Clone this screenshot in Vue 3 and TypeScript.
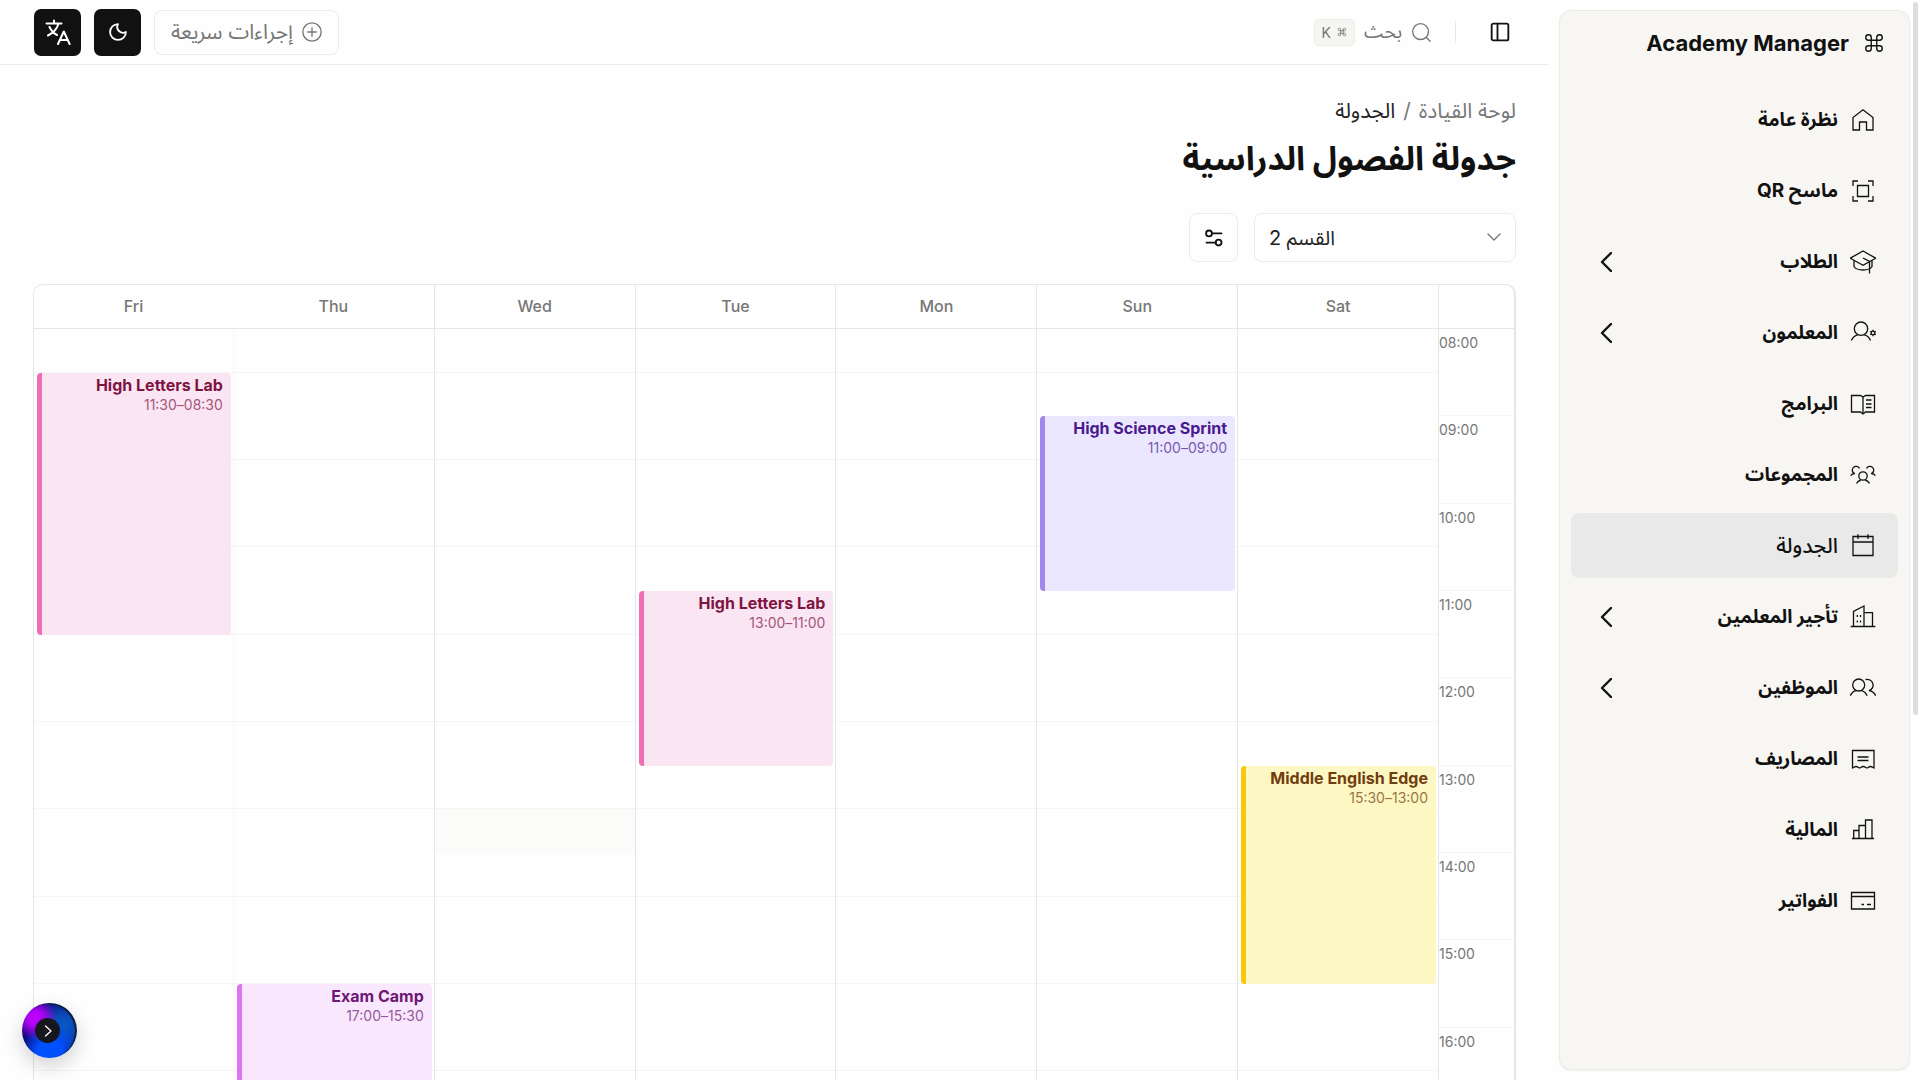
<script setup lang="ts">
import { ref } from 'vue'

interface NavItem {
  label: string
  icon: string[]
  expandable?: boolean
  active?: boolean
}

interface Lesson {
  title: string
  from: string
  to: string
  tone: string
}

interface Day {
  name: string
  lessons: Lesson[]
  hovered?: number
}

const navItems: NavItem[] = [
  { label: 'نظرة عامة', icon: ['M3 23V10.5L13 2.8l10 7.7V23h-6.5v-8h-7v8z'] },
  { label: 'ماسح QR', icon: ['M7.5 7.5h11v11h-11z', 'M8 3H3v5M18 3h5v5M8 23H3v-5M18 23h5v-5'] },
  {
    label: 'الطلاب',
    icon: ['M13 2l12.7 7.2L13 16.3.3 9.2z', 'M4 11.5v6c2 3.200 5.500 3.500 9 3.500s7-.3 9-3.500v-6', 'M13 9l6.500 3.500v12'],
    expandable: true,
  },
  {
    label: 'المعلمون',
    icon: [
      'M4.300 8.700a6.700 6.700 0 1 0 13.400 0a6.700 6.700 0 1 0-13.400 0',
      'M1.300 20.500c1.500-3.300 4-5.100 6.500-5.600M14.200 14.900c2.600.5 5 2.300 6.300 5.600',
      'M21.200 13a1.800 1.800 0 1 0 3.600 0a1.800 1.800 0 1 0-3.600 0M23 9.800v1.400M23 14.800v1.400M20.200 11.400l1.300.7M24.500 13.900l1.300.7M20.200 14.600l1.300-.7M24.500 12.100l1.300-.7',
    ],
    expandable: true,
  },
  {
    label: 'البرامج',
    icon: ['M1.500 4.500h9L13 6l2.500-1.500h9v16.500h-9L13 23l-2.500-2h-9z', 'M13 6v17M16 9h5.500M16 13h5.500M16 16.500h5.500'],
  },
  {
    label: 'المجموعات',
    icon: [
      'M8.800 14a4.200 4.200 0 1 0 8.400 0a4.200 4.200 0 1 0-8.400 0',
      'M6.500 21.500c1-2 2.500-3 4.300-3.500M19.500 21.500c-1-2-2.500-3-4.300-3.500',
      'M9.500 6.500a3.800 3.800 0 1 0-4.800 5.200M16.500 6.500a3.800 3.800 0 1 1 4.800 5.200',
      'M.7 13.800c.7-1.500 2-2.300 4-2.300M25.300 13.800c-.7-1.500-2-2.300-4-2.300',
    ],
  },
  { label: 'الجدولة', icon: ['M3 3.500h20v19H3zM3 9h20M8 1.300v4.700M18 1.300v4.700'], active: true },
  {
    label: 'تأجير المعلمين',
    icon: ['M.7 22.500h24.600M3.500 22.500v-15L14 2v20.500M14 8.700h8.500v13.800', 'M7.300 11v2M10.500 11v2M7.300 16.500v2M10.500 16.500v2'],
    expandable: true,
  },
  {
    label: 'الموظفين',
    icon: [
      'M2.700 10a6 6 0 1 0 12 0a6 6 0 1 0-12 0',
      'M.3 20.700c1.400-3 3.400-4.500 5.700-5M11.400 15.700c2.300.5 4.300 2 5.700 5',
      'M15.500 4.600a5.800 5.800 0 1 1 3.500 11.100c3 .5 5.300 2 6.700 5',
    ],
    expandable: true,
  },
  {
    label: 'المصاريف',
    icon: [
      'M2.500 22V4.500h21.500V22c-1.500 0-1.500-1.500-3.500-1.500S18.500 22 17 22s-1.700-1.500-3.700-1.500S11 22 9.500 22 8 20.500 6 20.500 4 22 2.500 22z',
      'M7.500 11h11M7.500 14.500h11',
    ],
  },
  { label: 'المالية', icon: ['M2 21.500h22M3.700 21.500v-8H9M9 21.500v-13h6.500M15.500 21.500V3H22v18.500'] },
  { label: 'الفواتير', icon: ['M1.500 4.500h23v16.500h-23zM1.500 8.500h23M11.500 16.500h2.500M17 16.500h4'] },
]

const days: Day[] = [
  { name: 'Sat', lessons: [{ title: 'Middle English Edge', from: '13:00', to: '15:30', tone: 'yellow' }] },
  { name: 'Sun', lessons: [{ title: 'High Science Sprint', from: '09:00', to: '11:00', tone: 'violet' }] },
  { name: 'Mon', lessons: [] },
  { name: 'Tue', lessons: [{ title: 'High Letters Lab', from: '11:00', to: '13:00', tone: 'pink' }] },
  { name: 'Wed', lessons: [], hovered: 12 },
  { name: 'Thu', lessons: [{ title: 'Exam Camp', from: '15:30', to: '17:00', tone: 'fuchsia' }] },
  { name: 'Fri', lessons: [{ title: 'High Letters Lab', from: '08:30', to: '11:30', tone: 'pink' }] },
]

const firstHour = 8
const hours = Array.from({ length: 9 }, (_, i) => `${String(firstHour + i).padStart(2, '0')}:00`)
const slots = Array.from({ length: 18 }, (_, i) => i + 1)

/* Grid line of a clock time: one row for every half hour after the first hour. */
function line(time: string): number {
  const [h, m] = time.split(':').map(Number)
  return (h - firstHour) * 2 + m / 30 + 1
}

const section = ref('2')
</script>

<template>
  <div class="app" dir="rtl">
    <aside class="sidebar">
      <div class="panel">
        <div class="brand">
          <svg class="brand-icon" viewBox="0 0 24 24"><path d="M15 6v12a3 3 0 1 0 3-3H6a3 3 0 1 0 3 3V6a3 3 0 1 0-3 3h12a3 3 0 1 0-3-3" /></svg>
          <span>Academy Manager</span>
        </div>
        <nav class="nav">
          <a v-for="item in navItems" :key="item.label" href="#" class="nav-item" :class="{ active: item.active }">
            <svg class="nav-icon" viewBox="0 0 26 26"><path v-for="d in item.icon" :key="d" :d="d" /></svg>
            <span class="nav-label">{{ item.label }}</span>
            <svg v-if="item.expandable" class="nav-chevron" viewBox="0 0 12 20"><path d="M11 1L2 10l9 9" /></svg>
          </a>
        </nav>
      </div>
    </aside>

    <div class="main">
      <header class="topbar">
        <button type="button" class="plain" aria-label="الشريط الجانبي">
          <svg class="i20 bold" viewBox="0 0 24 24"><rect x="2" y="2" width="20" height="20" rx="2" /><path d="M9 2v20" /></svg>
        </button>
        <span class="divider"></span>
        <button type="button" class="search">
          <svg class="i20" viewBox="0 0 24 24"><circle cx="11.500" cy="11.500" r="9.500" /><path d="M18.500 18.500L23 23" /></svg>
          <span>بحث</span>
          <kbd dir="ltr">
            <span>K</span>
            <svg class="cmd" viewBox="0 0 24 24"><path d="M15 6v12a3 3 0 1 0 3-3H6a3 3 0 1 0 3 3V6a3 3 0 1 0-3 3h12a3 3 0 1 0-3-3" /></svg>
          </kbd>
        </button>
        <div class="actions">
          <button type="button" class="quick">
            <svg class="i20" viewBox="0 0 24 24"><circle cx="12" cy="12" r="11" /><path d="M12 7v10M7 12h10" /></svg>
            <span>إجراءات سريعة</span>
          </button>
          <button type="button" class="dark" aria-label="المظهر">
            <svg class="i20 bold" viewBox="0 0 24 24"><path d="M12 2.500a7 7 0 0 0 9.500 9.500A9.500 9.500 0 1 1 12 2.500z" /></svg>
          </button>
          <button type="button" class="dark" aria-label="اللغة">
            <svg class="lang" viewBox="0 0 26 26"><path d="M1.500 4.500h15M9 1.500v3M4.500 8c2 4 4.500 6.500 7.500 8M13.500 4.500C12 10 9 13.500 3 16.500M13 25l5.800-12.500L24.600 25M15 21h7.600" /></svg>
          </button>
        </div>
      </header>

      <main class="content">
        <nav class="crumbs" aria-label="المسار">
          <a href="#">لوحة القيادة</a><span>/</span><span class="here">الجدولة</span>
        </nav>
        <h1>جدولة الفصول الدراسية</h1>
        <div class="filters">
          <div class="select-wrap">
            <select v-model="section" dir="ltr" aria-label="القسم">
              <option value="1">القسم 1</option>
              <option value="2">القسم 2</option>
            </select>
            <svg class="caret" viewBox="0 0 14 8"><path d="M1 1l6 6 6-6" /></svg>
          </div>
          <button type="button" class="tune" aria-label="تصفية">
            <svg class="i20 bold" viewBox="0 0 24 24"><circle cx="6" cy="6.500" r="3.500" /><path d="M9.500 6.500H21M3 17.500h11" /><circle cx="17.500" cy="17.500" r="3.500" /></svg>
          </button>
        </div>

        <section class="calendar">
          <div class="head">
            <div class="corner"></div>
            <div v-for="day in days" :key="day.name" class="day-name">{{ day.name }}</div>
          </div>
          <div class="body">
            <div class="hours">
              <div v-for="hour in hours" :key="hour" class="hour">{{ hour }}</div>
            </div>
            <div v-for="day in days" :key="day.name" class="day">
              <div
                v-for="slot in slots"
                :key="slot"
                class="slot"
                :class="{ hovered: day.hovered === slot }"
                :style="{ gridRow: slot }"
              ></div>
              <article
                v-for="lesson in day.lessons"
                :key="lesson.title"
                class="lesson"
                :class="lesson.tone"
                :style="{ gridRow: `${line(lesson.from)} / ${line(lesson.to)}` }"
              >
                <h2>{{ lesson.title }}</h2>
                <p>{{ lesson.from }}–{{ lesson.to }}</p>
              </article>
            </div>
          </div>
        </section>
      </main>
    </div>

    <button type="button" class="orb" aria-label="فتح">
      <span class="orb-core"><svg viewBox="0 0 8 12"><path d="M1.500 1L7 6l-5.500 5" /></svg></span>
    </button>
    <div class="thumb" aria-hidden="true"></div>
  </div>
</template>

<style>
body {
  overflow: hidden;
  background: #fefefe;
}
</style>

<style scoped>
* {
  box-sizing: border-box;
}
.app {
  display: flex;
  height: 100vh;
  overflow: hidden;
  color: #111;
  background: #fefefe;
  font-family: Inter, 'Noto Sans Arabic', 'DejaVu Sans', sans-serif;
  font-size: 21px;
}
svg {
  display: block;
  flex: none;
  fill: none;
  stroke: currentColor;
  stroke-width: 2;
  stroke-linecap: round;
  stroke-linejoin: round;
}
button,
select {
  margin: 0;
  font: inherit;
  cursor: pointer;
}
button {
  display: flex;
  align-items: center;
  justify-content: center;
  padding: 0;
  border: 0;
  background: none;
  color: inherit;
}
a {
  color: inherit;
  text-decoration: none;
}

.sidebar {
  flex: none;
  width: 371px;
  padding: 10px;
}
.panel {
  height: 100%;
  padding: 12px 11px;
  border: 1px solid #ebebe8;
  border-radius: 12px;
  background: #f7f6f3;
  box-shadow: 0 1px 2px rgba(0, 0, 0, 0.06);
}
.brand {
  display: flex;
  align-items: center;
  gap: 14px;
  height: 40px;
  margin-bottom: 24px;
  padding: 0 13px;
  font-size: 22px;
  font-weight: 700;
}
.brand-icon {
  width: 22px;
  height: 22px;
  stroke-width: 1.5;
}
.nav {
  display: flex;
  flex-direction: column;
  gap: 6px;
}
.nav-item {
  display: flex;
  align-items: center;
  gap: 12px;
  height: 65px;
  padding: 0 22px 0 29px;
  border-radius: 8px;
  font-size: 19px;
  font-weight: 700;
}
.nav-item.active {
  background: #e9e9e9;
  font-size: 21px;
  font-weight: 500;
}
.nav-icon {
  width: 26px;
  height: 26px;
  stroke-width: 1.3;
  stroke-linecap: butt;
  stroke-linejoin: miter;
}
.nav-label {
  flex: 1;
}
.nav-chevron {
  width: 12px;
  height: 20px;
  stroke-width: 2.4;
}

.main {
  flex: 1;
  min-width: 0;
}
.topbar {
  display: flex;
  align-items: center;
  height: 65px;
  padding: 0 33px 0 34px;
  border-bottom: 1px solid #ebebeb;
}
.i20 {
  width: 20px;
  height: 20px;
  stroke-width: 1.6;
}
.i20.bold {
  stroke-width: 2.2;
}
.plain {
  width: 32px;
  height: 32px;
}
.divider {
  width: 1px;
  height: 22px;
  margin: 0 28px 0 24px;
  background: #e6e6e6;
}
.search {
  gap: 9px;
  font-size: 19px;
  color: #757575;
}
kbd {
  display: flex;
  align-items: center;
  gap: 6px;
  height: 27px;
  padding: 0 7px;
  border: 1px solid #ebebe8;
  border-radius: 5px;
  background: #f5f5f2;
  font: inherit;
  font-size: 14px;
}
.cmd {
  width: 10px;
  height: 10px;
}
.actions {
  display: flex;
  align-items: center;
  gap: 13px;
  margin-right: auto;
}
.quick {
  gap: 9px;
  height: 45px;
  padding: 0 16px;
  border: 1px solid #ebebeb;
  border-radius: 8px;
  color: #757575;
}
.dark {
  width: 47px;
  height: 47px;
  border-radius: 7px;
  background: #111;
  color: #fff;
}
.lang {
  width: 26px;
  height: 26px;
}

.content {
  padding: 32px 33px 0;
}
.crumbs {
  display: flex;
  gap: 8px;
  line-height: 28px;
  color: #777;
}
.here {
  color: #222;
}
h1 {
  margin: 9px 0 31px;
  font-size: 33px;
  line-height: 48px;
  font-weight: 700;
}
.filters {
  display: flex;
  gap: 16px;
  margin-bottom: 22px;
}
.select-wrap {
  position: relative;
  width: 262px;
}
select {
  width: 100%;
  height: 49px;
  padding: 0 14px;
  border: 1px solid #ebebeb;
  border-radius: 8px;
  appearance: none;
  background: #fff;
  color: #222;
  font-size: 20px;
}
.caret {
  position: absolute;
  top: 20px;
  right: 15px;
  width: 14px;
  height: 8px;
  stroke-width: 1.4;
  color: #777;
  pointer-events: none;
}
.tune {
  width: 49px;
  height: 49px;
  border: 1px solid #ebebeb;
  border-radius: 8px;
}

.calendar {
  overflow: hidden;
  border: 1px solid #e6e6e6;
  border-right-width: 2px;
  border-radius: 10px 10px 0 0;
}
.head,
.body {
  display: grid;
  grid-template-columns: 76px repeat(6, 201fr) 199fr;
}
.head {
  height: 44px;
  border-bottom: 1px solid #e6e6e6;
}
.corner,
.day-name,
.hours,
.day {
  border-left: 1px solid #e6e6e6;
}
.day-name {
  font-size: 16px;
  font-weight: 500;
  line-height: 43px;
  text-align: center;
  color: #777;
}
.day-name:nth-last-child(-n + 2),
.day:last-child {
  border-left: 0;
}
.day:nth-last-child(2) {
  border-left-color: #f8f8f8;
}
.body {
  height: 786px;
}
.hours {
  display: grid;
  grid-template-rows: repeat(9, 1fr);
}
.hour {
  border-bottom: 1px solid #f5f5f5;
  font-size: 14px;
  line-height: 28px;
  text-align: left;
  color: #777;
}
.day {
  display: grid;
  grid-template-rows: repeat(18, 1fr);
}
.slot {
  grid-column: 1;
}
.slot:nth-child(odd) {
  border-bottom: 1px solid #f5f5f5;
}
.slot.hovered {
  background: #fbfbf9;
}
.lesson {
  grid-column: 1;
  min-width: 0;
  margin: 0 2px 0 3px;
  padding: 2px 8px 0 4px;
  border-left: 5px solid;
  border-radius: 4px;
}
.lesson h2,
.lesson p {
  margin: 0;
  line-height: 20px;
  white-space: nowrap;
}
.lesson h2 {
  font-size: 16px;
  font-weight: 700;
}
.lesson p {
  font-size: 14px;
  opacity: 0.7;
}
.pink {
  border-color: #f06fb4;
  background: #fae6f3;
  color: #7f1442;
}
.violet {
  border-color: #a387ed;
  background: #ebe7fe;
  color: #4a1a90;
}
.yellow {
  border-color: #f6c80f;
  background: #fdf8c3;
  color: #713c0e;
}
.fuchsia {
  border-color: #df73f4;
  background: #f9e7fd;
  color: #6d1874;
}

.orb {
  position: fixed;
  bottom: 22px;
  left: 22px;
  width: 55px;
  height: 55px;
  border-radius: 50%;
  background:
    radial-gradient(circle at 24% 28%, #c400ff 0, rgba(190, 0, 255, 0.9) 14%, transparent 38%),
    radial-gradient(circle at 50% 88%, #0050ff 0, #0050ff 22%, transparent 52%),
    radial-gradient(circle at 76% 42%, #0a58c8 0, #0a4ab8 22%, #080a78 58%);
  box-shadow:
    inset -2px 1px 1px #10203a,
    0 8px 20px rgba(0, 0, 0, 0.18);
}
.orb-core {
  display: flex;
  align-items: center;
  justify-content: center;
  width: 25px;
  height: 25px;
  margin-right: 4px;
  border-radius: 50%;
  background: #15171c;
  color: #fff;
}
.orb-core svg {
  width: 8px;
  height: 12px;
  stroke-width: 1.3;
}
.thumb {
  position: fixed;
  top: 2px;
  right: 2px;
  width: 5px;
  height: 66vh;
  border-radius: 3px;
  background: #dedede;
}
</style>
